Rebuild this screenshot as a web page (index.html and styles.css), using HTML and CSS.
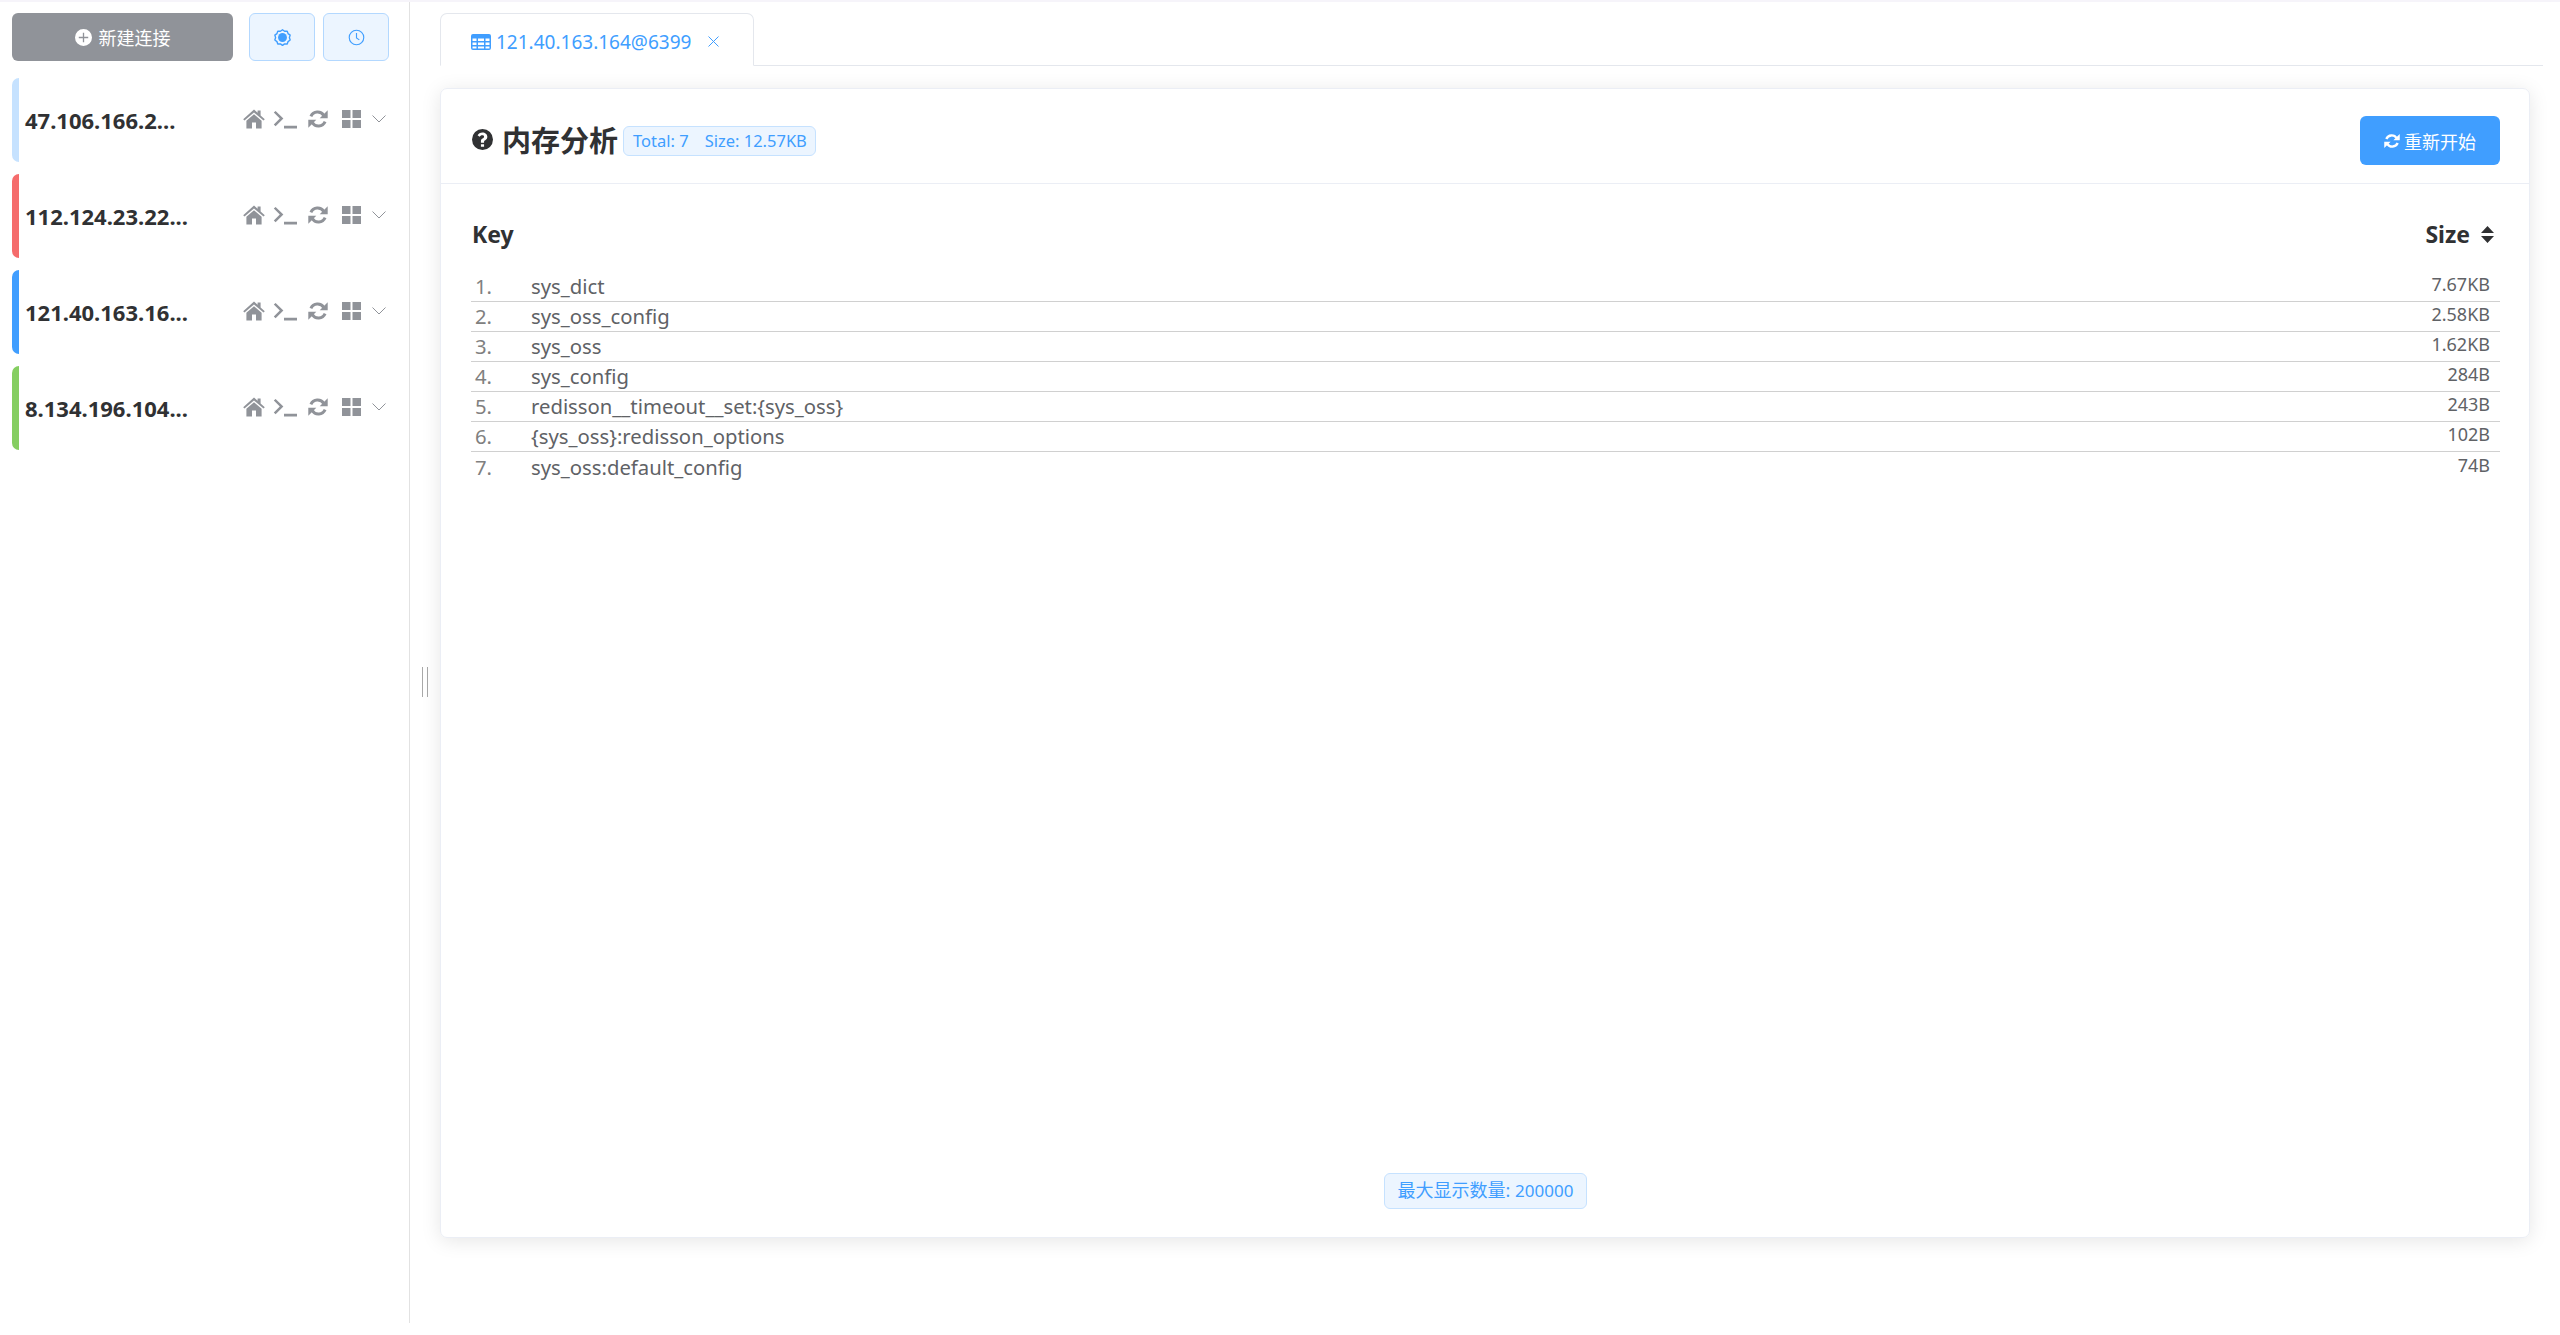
FILE: index.html
```html
<!DOCTYPE html>
<html lang="en">
<head>
  <meta charset="UTF-8" />
  <title>Memory Analysis</title>
  <link rel="stylesheet" href="styles.css">
</head>
<body>
  <svg class="sprites" width="0" height="0">
    <symbol id="i-home" viewBox="0 0 22 20"><path d="M11 0.5 L14.6 3.7 V1.6 H17.6 V6.4 L21.8 10.2 L20.5 11.6 L11 3.4 L1.5 11.6 L0.2 10.2 Z M11 5.2 L18.6 11.8 V19.4 H13 V13.6 H9 V19.4 H3.4 V11.8 Z"/></symbol>
    <symbol id="i-term" viewBox="0 0 24 18"><path d="M0.8 1.6 L2.6 0 L10.4 7.6 L2.6 15.2 L0.8 13.6 L6.8 7.6 Z M11 14.8 H24 V17.4 H11 Z"/></symbol>
    <symbol id="i-refresh" viewBox="0 0 20 20"><path d="M15.800 6.500 A7.300 7.300 0 0 0 2.900 7.400 M4.200 13.500 A7.300 7.300 0 0 0 17.100 12.600" fill="none" stroke="currentColor" stroke-width="3"/><path d="M19.700 1.200 V9.200 H11.700 Z M.3 18.800 V10.800 H8.300 Z" fill="currentColor"/></symbol>
    <symbol id="i-grid" viewBox="0 0 19 18"><path d="M0 0 H8.500 V8 H0 Z M10.500 0 H19 V8 H10.500 Z M0 10 H8.500 V18 H0 Z M10.500 10 H19 V18 H10.500 Z"/></symbol>
    <symbol id="i-chevron" viewBox="0 0 14 8"><path d="M0.5 0.5 L7 7 L13.5 0.5" fill="none" stroke="currentColor" stroke-width="1"/></symbol>
  </svg>

  <div class="top-strip"></div>
  <div class="app">
    <!-- Connections -->
    <aside class="sidebar">
      <div class="toolbar">
        <button class="btn btn-new">
          <svg class="ico-plus" viewBox="0 0 18 18"><path d="M9 0a9 9 0 1 0 0 18A9 9 0 0 0 9 0Zm.7 8.300h4.300v1.400H9.700v4.300H8.300V9.700H4V8.300h4.300V4h1.400Z"/></svg>
          新建连接
        </button>
        <button class="btn btn-light">
          <svg class="ico-small" viewBox="0 0 18 18"><path d="M9 .8 11.200 2.400 14 2.300 14.900 4.900 17.100 6.500 16.300 9.100 17.100 11.700 14.900 13.300 14 15.900 11.200 15.800 9 17.400 6.800 15.800 4 15.900 3.100 13.300 .9 11.700 1.700 9.100 .9 6.500 3.100 4.900 4 2.300 6.800 2.400Z" fill="none" stroke="currentColor" stroke-width="1.500" stroke-linejoin="round"/><circle cx="9" cy="9" r="4.700" fill="currentColor"/></svg>
        </button>
        <button class="btn btn-light">
          <svg class="ico-small" viewBox="0 0 18 18"><circle cx="9" cy="9" r="7.700" fill="none" stroke="currentColor" stroke-width="1.200"/><path d="M9 4.200V9.500L12 11.500" fill="none" stroke="currentColor" stroke-width="1.200"/></svg>
        </button>
      </div>

      <div class="conn conn-light">
        <span class="conn-name">47.106.166.2...</span>
        <span class="conn-icons">
          <svg class="i-home"><use href="#i-home"/></svg>
          <svg class="i-term"><use href="#i-term"/></svg>
          <svg class="i-refresh"><use href="#i-refresh"/></svg>
          <svg class="i-grid"><use href="#i-grid"/></svg>
          <svg class="i-chevron"><use href="#i-chevron"/></svg>
        </span>
      </div>
      <div class="conn conn-red">
        <span class="conn-name">112.124.23.22...</span>
        <span class="conn-icons">
          <svg class="i-home"><use href="#i-home"/></svg>
          <svg class="i-term"><use href="#i-term"/></svg>
          <svg class="i-refresh"><use href="#i-refresh"/></svg>
          <svg class="i-grid"><use href="#i-grid"/></svg>
          <svg class="i-chevron"><use href="#i-chevron"/></svg>
        </span>
      </div>
      <div class="conn conn-blue">
        <span class="conn-name">121.40.163.16...</span>
        <span class="conn-icons">
          <svg class="i-home"><use href="#i-home"/></svg>
          <svg class="i-term"><use href="#i-term"/></svg>
          <svg class="i-refresh"><use href="#i-refresh"/></svg>
          <svg class="i-grid"><use href="#i-grid"/></svg>
          <svg class="i-chevron"><use href="#i-chevron"/></svg>
        </span>
      </div>
      <div class="conn conn-green">
        <span class="conn-name">8.134.196.104...</span>
        <span class="conn-icons">
          <svg class="i-home"><use href="#i-home"/></svg>
          <svg class="i-term"><use href="#i-term"/></svg>
          <svg class="i-refresh"><use href="#i-refresh"/></svg>
          <svg class="i-grid"><use href="#i-grid"/></svg>
          <svg class="i-chevron"><use href="#i-chevron"/></svg>
        </span>
      </div>
    </aside>

    <div class="resizer"><span class="grip"></span></div>

    <main class="main">
      <div class="tabs">
        <div class="tab">
          <svg class="ico-table" viewBox="0 0 20 16"><path fill-rule="evenodd" d="M2 0H18A2 2 0 0 1 20 2V14A2 2 0 0 1 18 16H2A2 2 0 0 1 0 14V2A2 2 0 0 1 2 0ZM1.500 4.500V7H5.500V4.500ZM7 4.500V7H13V4.500ZM14.500 4.500V7H18.500V4.500ZM1.500 8.500V11H5.500V8.500ZM7 8.500V11H13V8.500ZM14.500 8.500V11H18.500V8.500ZM1.500 12.500V14.500H5.500V12.500ZM7 12.500V14.500H13V12.500ZM14.500 12.500V14.500H18.500V12.500Z"/></svg>
          <span class="tab-label">121.40.163.164@6399</span>
          <svg class="ico-close" viewBox="0 0 11 11"><path d="M.5.500 10.500 10.500M10.500.500 .5 10.500" fill="none" stroke="currentColor"/></svg>
        </div>
      </div>

      <section class="card">
        <header class="card-head">
          <svg class="ico-help" viewBox="0 0 20 20"><path fill-rule="evenodd" d="M10 0a10 10 0 1 1 0 20A10 10 0 0 1 10 0ZM8.500 14.500V17H11.500V14.500ZM10 3.300C7.700 3.300 6.200 4.400 5.300 6L7.200 7.400C7.800 6.600 8.500 6 9.700 6 10.700 6 11.500 6.500 11.500 7.300 11.500 8.100 10.900 8.500 10 9 9 9.600 8.500 10.300 8.500 11.500V13H11.500V12C11.500 11.300 12 11 12.700 10.600 13.700 10 14.600 9.200 14.600 7.400 14.600 5 12.400 3.300 10 3.300Z"/></svg>
          <h2 class="card-title">内存分析</h2>
          <span class="tag tag-total"><span class="tag-gap">Total: 7</span>Size: 12.57KB</span>
          <button class="btn btn-primary">
            <svg class="ico-sync"><use href="#i-refresh"/></svg>
            重新开始
          </button>
        </header>

        <div class="card-body">
          <div class="list-head">
            <span>Key</span>
            <span class="head-size">Size
              <svg class="ico-sort" viewBox="0 0 13 17"><path d="M6.500 0 13 7H0ZM0 10H13L6.500 17Z"/></svg>
            </span>
          </div>

          <ul class="key-list">
            <li class="key-row"><span class="key-num">1.</span><span class="key-name">sys_dict</span><span class="key-size">7.67KB</span></li>
            <li class="key-row"><span class="key-num">2.</span><span class="key-name">sys_oss_config</span><span class="key-size">2.58KB</span></li>
            <li class="key-row"><span class="key-num">3.</span><span class="key-name">sys_oss</span><span class="key-size">1.62KB</span></li>
            <li class="key-row"><span class="key-num">4.</span><span class="key-name">sys_config</span><span class="key-size">284B</span></li>
            <li class="key-row"><span class="key-num">5.</span><span class="key-name">redisson__timeout__set:{sys_oss}</span><span class="key-size">243B</span></li>
            <li class="key-row"><span class="key-num">6.</span><span class="key-name">{sys_oss}:redisson_options</span><span class="key-size">102B</span></li>
            <li class="key-row"><span class="key-num">7.</span><span class="key-name">sys_oss:default_config</span><span class="key-size">74B</span></li>
          </ul>

          <div class="card-foot">
            <span class="tag tag-max">最大显示数量: <span class="tag-num">200000</span></span>
          </div>
        </div>
      </section>
    </main>
  </div>
</body>
</html>
```

FILE: styles.css
```css
* {
  box-sizing: border-box;
}
html, body {
  margin: 0;
  height: 100%;
}
body {
  font-family: "Noto Sans", "Noto Sans CJK SC", sans-serif;
  color: #303133;
  background: #fff;
  overflow: hidden;
}
.sprites {
  position: absolute;
}
.top-strip {
  height: 2px;
  background: #f6f4fa;
}
.app {
  display: flex;
  height: 1321px;
}

/* sidebar */
.sidebar {
  width: 410px;
  padding: 11px 19px 0 12px;
  border-right: 1px solid #e2e2e2;
  flex-shrink: 0;
}
.toolbar {
  display: flex;
  gap: 8px;
  margin-bottom: 17px;
}
.btn {
  display: flex;
  align-items: center;
  justify-content: center;
  height: 48px;
  border: none;
  border-radius: 6px;
  font-family: inherit;
  font-size: 18px;
  padding: 0;
}
.btn-new {
  width: 221px;
  margin-right: 8px;
  background: #909399;
  color: #fff;
  gap: 7px;
}
.btn-light {
  width: 66px;
  background: #ecf5ff;
  border: 1px solid #b3d8ff;
  color: #409eff;
}
.ico-plus {
  width: 17px;
  height: 17px;
  fill: #fff;
}
.ico-small {
  width: 17px;
  height: 17px;
}
.conn {
  display: flex;
  align-items: center;
  height: 84px;
  margin-bottom: 12px;
  padding: 0 4px 0 6px;
  border-left: 7px solid #c6e2ff;
  border-radius: 7px;
}
.conn-red { border-left-color: #f56c6c; }
.conn-blue { border-left-color: #409eff; }
.conn-green { border-left-color: #85ce61; }
.conn-name {
  flex: 1;
  font-size: 22px;
  font-weight: 700;
  white-space: nowrap;
}
.conn-icons {
  display: flex;
  align-items: center;
  margin-top: -2px;
  color: #909399;
  fill: #909399;
}
.i-home { width: 22px; height: 20px; margin-right: 8px; }
.i-term { width: 24px; height: 18px; margin-right: 11px; margin-top: 1px; }
.i-refresh { width: 20px; height: 20px; margin-right: 14px; }
.i-grid { width: 19px; height: 18px; margin-right: 11px; }
.i-chevron { width: 14px; height: 8px; }

/* drag handle */
.resizer {
  width: 30px;
  flex-shrink: 0;
  display: flex;
  align-items: center;
  justify-content: center;
}
.grip {
  width: 6px;
  height: 30px;
  margin-top: 38px;
  border-left: 1px solid #a8a8a8;
  border-right: 1px solid #a8a8a8;
}

/* main area */
.main {
  flex: 1;
  padding: 11px 17px 0 0;
  min-width: 0;
}
.tabs {
  height: 53px;
  border-bottom: 1px solid #e4e7ed;
  margin-bottom: 22px;
}
.tab {
  display: flex;
  align-items: center;
  width: 314px;
  height: 53px;
  padding: 4px 0 0 30px;
  border: 1px solid #e4e7ed;
  border-bottom-color: #fff;
  border-radius: 7px 7px 0 0;
  color: #409eff;
  fill: #409eff;
}
.ico-table {
  width: 20px;
  height: 16px;
  margin-right: 5px;
}
.tab-label {
  font-size: 19px;
}
.ico-close {
  width: 11px;
  height: 11px;
  margin-left: 17px;
}
.card {
  width: 2090px;
  height: 1150px;
  display: flex;
  flex-direction: column;
  border: 1px solid #ebeef5;
  border-radius: 7px;
  box-shadow: 0 3px 20px rgba(0, 0, 0, .1);
}
.card-head {
  display: flex;
  align-items: center;
  height: 95px;
  padding: 9px 29px 0 31px;
  border-bottom: 1px solid #ebeef5;
  flex-shrink: 0;
}
.ico-help {
  width: 21px;
  height: 21px;
  fill: #303133;
  margin-top: -2px;
  margin-right: 9px;
}
.card-title {
  margin: -4px 5px 0 0;
  font-size: 29px;
  font-weight: 700;
}
.tag {
  display: inline-block;
  background: #ecf5ff;
  border: 1px solid #c6e2ff;
  border-radius: 6px;
  color: #409eff;
  font-size: 18px;
  white-space: nowrap;
}
.tag-total {
  height: 30px;
  line-height: 28px;
  padding: 0 8px 0 9px;
  font-size: 16.5px;
}
.tag-gap {
  margin-right: 16px;
}
.tag-num {
  font-size: 17px;
}
.btn-primary {
  width: 140px;
  height: 49px;
  margin-left: auto;
  background: #409eff;
  color: #fff;
  gap: 4px;
}
.ico-sync {
  width: 16px;
  height: 16px;
  color: #fff;
}
.card-body {
  flex: 1;
  display: flex;
  flex-direction: column;
  padding: 0 29px 0 30px;
  min-height: 0;
}
.list-head {
  display: flex;
  justify-content: space-between;
  align-items: center;
  height: 88px;
  padding: 12px 6px 0 1px;
  font-size: 23px;
  font-weight: 700;
}
.head-size {
  display: flex;
  align-items: center;
  gap: 11px;
}
.ico-sort {
  width: 13px;
  height: 17px;
  fill: #303133;
}
.key-list {
  list-style: none;
  margin: 0;
  padding: 0;
}
.key-row {
  display: flex;
  align-items: center;
  height: 30px;
  padding-bottom: 1px;
  font-size: 20.3px;
  color: #606266;
  border-bottom: 1px solid #d0d0d0;
}
.key-row:last-child {
  border-bottom: none;
}
.key-num {
  width: 60px;
  padding-left: 4px;
  color: #808080;
}
.key-name {
  flex: 1;
}
.key-size {
  padding-right: 10px;
  margin-top: -4px;
  font-size: 18px;
}
.card-foot {
  display: flex;
  justify-content: center;
  margin-top: auto;
  margin-bottom: 28px;
}
.tag-max {
  height: 36px;
  line-height: 33px;
  padding: 0 13px;
}
```
